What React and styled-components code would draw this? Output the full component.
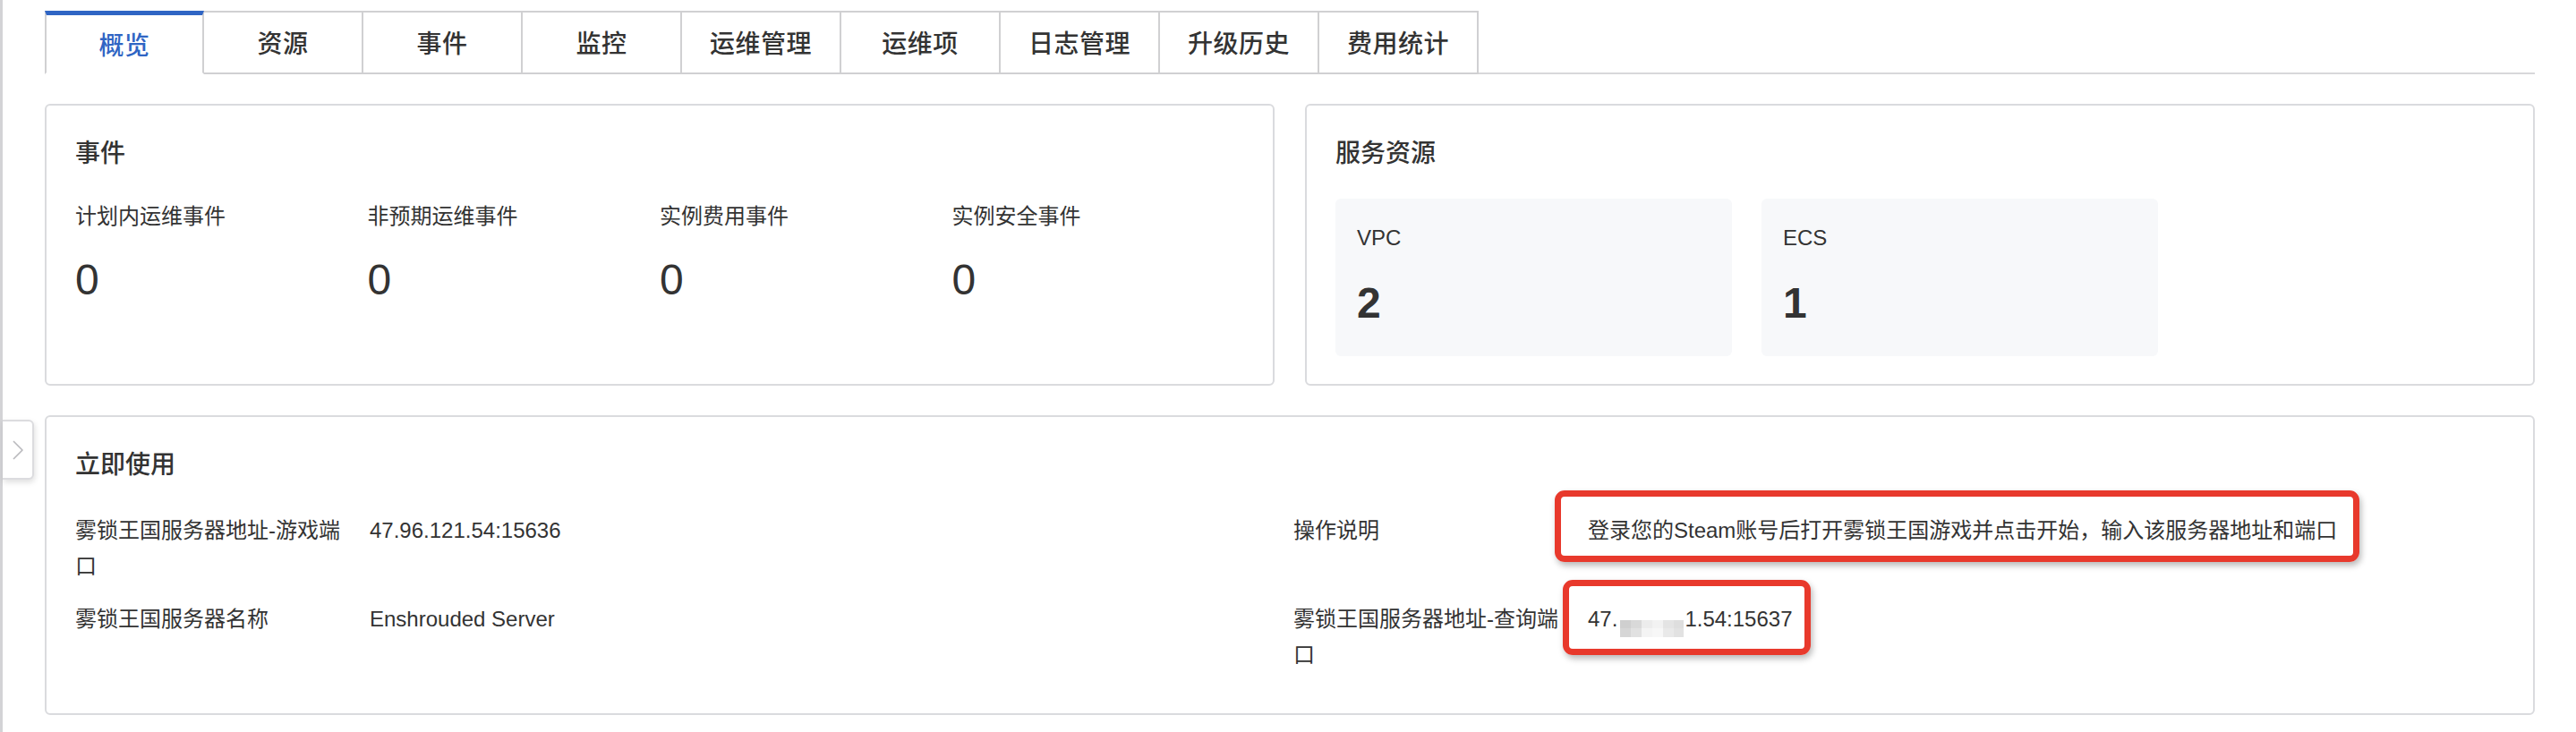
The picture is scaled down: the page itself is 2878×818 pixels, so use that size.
import React from "react";
import styled, { createGlobalStyle } from "styled-components";

const GlobalStyle = createGlobalStyle`
  html, body { margin: 0; padding: 0; background: #ffffff; }
  body {
    font-family: "Liberation Sans", "Noto Sans CJK SC", sans-serif;
    color: #333333;
    -webkit-font-smoothing: antialiased;
  }
  * { box-sizing: border-box; }
`;

const Page = styled.div`
  position: relative;
  min-height: 818px;
  border-left: 3px solid #d3d3d6;
  padding: 12px 46px 0 47px;
`;

const TabBar = styled.div`
  display: flex;
  height: 71px;
`;

const Tab = styled.div`
  width: 178px;
  flex: none;
  display: flex;
  align-items: center;
  justify-content: center;
  font-size: 28px;
  font-weight: 500;
  letter-spacing: 0.5px;
  color: ${(p) => (p.$active ? "#2f65c4" : "#333333")};
  background: #ffffff;
  border-top: ${(p) => (p.$active ? "5px solid #2f65c4" : "2px solid #d0d0d2")};
  border-right: 2px solid #d0d0d2;
  border-bottom: ${(p) => (p.$active ? "2px solid #ffffff" : "2px solid #d0d0d2")};
  border-left: ${(p) => (p.$first ? "2px solid #d0d0d2" : "none")};
  padding-bottom: ${(p) => (p.$active ? "0" : "2px")};
`;

const TabFill = styled.div`
  flex: 1;
  border-bottom: 2px solid #d8d8da;
`;

const TopGrid = styled.div`
  display: grid;
  grid-template-columns: 1fr 1fr;
  column-gap: 34px;
  margin-top: 33px;
`;

const Card = styled.section`
  border: 2px solid #dadbde;
  border-radius: 6px;
  background: #ffffff;
  padding: ${(p) => p.$pad || "34px 32px 31px"};
  margin-top: ${(p) => p.$mt || "0"};
`;

const CardTitle = styled.h2`
  margin: 0;
  font-size: 28px;
  line-height: 40px;
  font-weight: 500;
  color: #333333;
`;

const EventGrid = styled.div`
  display: grid;
  grid-template-columns: repeat(4, 1fr);
  margin-top: 32px;
`;

const Stat = styled.div`
  display: flex;
  flex-direction: column;
`;

const StatLabel = styled.div`
  font-size: 24px;
  line-height: 36px;
  color: #333333;
`;

const StatValue = styled.div`
  font-size: 48px;
  line-height: 56px;
  font-weight: ${(p) => (p.$bold ? 700 : 400)};
  color: #333333;
  margin-top: ${(p) => p.$mt || "25px"};
`;

const ResourceRow = styled.div`
  display: flex;
  gap: 33px;
  margin-top: 30px;
`;

const ResourceBox = styled.div`
  width: 443px;
  height: 176px;
  background: #f7f8fa;
  border-radius: 6px;
  padding: 26px 24px 0;
`;

const InfoGrid = styled.div`
  display: grid;
  grid-template-columns: 1fr 1fr;
  column-gap: 8px;
  row-gap: 19px;
  margin-top: 33px;
`;

const InfoItem = styled.div`
  display: grid;
  grid-template-columns: 308px 1fr;
  column-gap: 21px;
  font-size: 24px;
  line-height: 40px;
  color: #333333;
`;

const InfoLabel = styled.div`
  word-break: break-all;
`;

const InfoValue = styled.div``;

const Marked = styled.span`
  position: relative;
  display: inline-block;
`;

const RedMark = styled.span`
  position: absolute;
  top: ${(p) => p.$t}px;
  left: ${(p) => p.$l}px;
  right: ${(p) => p.$r}px;
  bottom: ${(p) => p.$b}px;
  border: 7px solid #e8392c;
  border-radius: 11px;
  box-shadow: 2px 4px 7px rgba(0, 0, 0, 0.28);
  pointer-events: none;
`;

const Mosaic = styled.span`
  display: inline-grid;
  grid-template-columns: repeat(6, 1fr);
  grid-template-rows: repeat(2, 1fr);
  width: 71px;
  height: 19px;
  vertical-align: -2px;
  margin: 0 1px 0 3px;
`;

const MosaicCell = styled.span`
  background: ${(p) => p.$c};
`;

const Handle = styled.div`
  position: absolute;
  left: 0;
  top: 469px;
  width: 35px;
  height: 67px;
  background: #ffffff;
  border: 2px solid #dcdcdf;
  border-left: none;
  border-radius: 0 6px 6px 0;
  box-shadow: 1px 3px 6px rgba(0, 0, 0, 0.13);
  display: flex;
  align-items: center;
  justify-content: center;
`;

const mosaicColors = [
  "#cfcfcf", "#d9d9d9", "#ececec", "#f2f2f2", "#e4e4e4", "#dedede",
  "#d6d6d6", "#e1e1e1", "#f4f4f4", "#f7f7f7", "#e9e9e9", "#e2e2e2",
];

const tabs = ["概览", "资源", "事件", "监控", "运维管理", "运维项", "日志管理", "升级历史", "费用统计"];
const events = ["计划内运维事件", "非预期运维事件", "实例费用事件", "实例安全事件"];

export default function App() {
  return (
    <>
      <GlobalStyle />
      <Page>
        <Handle>
          <svg width="14" height="22" viewBox="0 0 14 22" fill="none">
            <polyline points="2,1 12,11 2,21" stroke="#b9b9bd" strokeWidth="1.6" strokeLinejoin="round" />
          </svg>
        </Handle>

        <TabBar>
          {tabs.map((t, i) => (
            <Tab key={t} $active={i === 0} $first={i === 0}>
              {t}
            </Tab>
          ))}
          <TabFill />
        </TabBar>

        <TopGrid>
          <Card>
            <CardTitle>事件</CardTitle>
            <EventGrid>
              {events.map((e) => (
                <Stat key={e}>
                  <StatLabel>{e}</StatLabel>
                  <StatValue>0</StatValue>
                </Stat>
              ))}
            </EventGrid>
          </Card>
          <Card>
            <CardTitle>服务资源</CardTitle>
            <ResourceRow>
              <ResourceBox>
                <StatLabel>VPC</StatLabel>
                <StatValue $bold $mt="27px">2</StatValue>
              </ResourceBox>
              <ResourceBox>
                <StatLabel>ECS</StatLabel>
                <StatValue $bold $mt="27px">1</StatValue>
              </ResourceBox>
            </ResourceRow>
          </Card>
        </TopGrid>

        <Card $mt="33px" $pad="34px 32px 45px">
          <CardTitle>立即使用</CardTitle>
          <InfoGrid>
            <InfoItem>
              <InfoLabel>雾锁王国服务器地址-游戏端口</InfoLabel>
              <InfoValue>47.96.121.54:15636</InfoValue>
            </InfoItem>
            <InfoItem>
              <InfoLabel>操作说明</InfoLabel>
              <InfoValue>
                <Marked>
                  登录您的Steam账号后打开雾锁王国游戏并点击开始，输入该服务器地址和端口
                  <RedMark $t={-25} $l={-37} $r={-25} $b={-15} />
                </Marked>
              </InfoValue>
            </InfoItem>
            <InfoItem>
              <InfoLabel>雾锁王国服务器名称</InfoLabel>
              <InfoValue>Enshrouded Server</InfoValue>
            </InfoItem>
            <InfoItem>
              <InfoLabel>雾锁王国服务器地址-查询端口</InfoLabel>
              <InfoValue>
                <Marked>
                  47.
                  <Mosaic>
                    {mosaicColors.map((c, i) => (
                      <MosaicCell key={i} $c={c} />
                    ))}
                  </Mosaic>
                  1.54:15637
                  <RedMark $t={-24} $l={-28} $r={-20} $b={-20} />
                </Marked>
              </InfoValue>
            </InfoItem>
          </InfoGrid>
        </Card>
      </Page>
    </>
  );
}
